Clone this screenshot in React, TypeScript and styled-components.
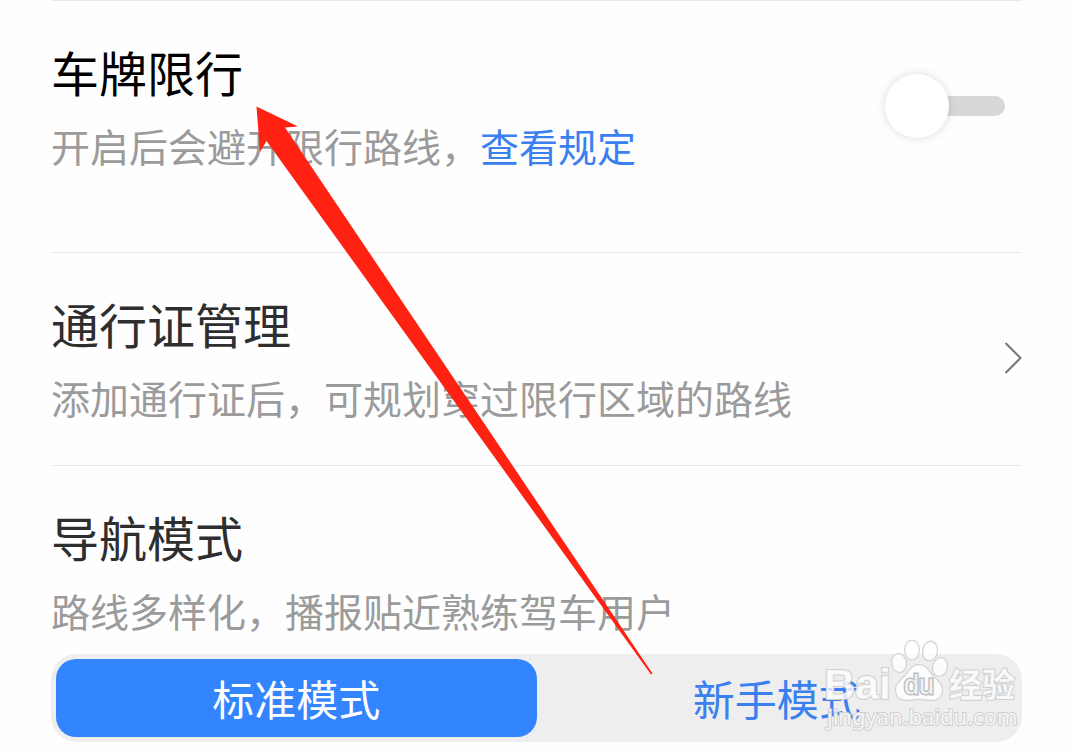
import React, { useState } from "react";
import styled, { createGlobalStyle } from "styled-components";

const GlobalStyle = createGlobalStyle`
  * {
    box-sizing: border-box;
  }
  body {
    margin: 0;
    background: #fefefe;
    font-family: "Noto Sans CJK SC", sans-serif;
  }
`;

const Page = styled.main`
  position: relative;
  padding: 0 54px 12px 51px;
  overflow: hidden;
`;

const Section = styled.section<{ $bottom: number }>`
  border-top: 1px solid #e9e9e9;
  padding: 36px 0 ${(p) => p.$bottom}px;
`;

const Row = styled.div`
  display: flex;
  align-items: center;
  justify-content: space-between;
`;

const Texts = styled.div`
  display: flex;
  flex-direction: column;
  gap: 18px;
  padding-bottom: 8px;
`;

const Title = styled.h2<{ $strong?: boolean }>`
  margin: 0;
  font-size: 48px;
  line-height: 68px;
  font-weight: 400;
  color: ${(p) => (p.$strong ? "#000" : "#2e2e2e")};
`;

const Description = styled.p`
  margin: 0;
  font-size: 39px;
  line-height: 44px;
  font-weight: 400;
  white-space: nowrap;
  color: #9b9b9b;
`;

const RuleLink = styled.a`
  color: #3a80f0;
  text-decoration: none;
`;

const Switch = styled.input`
  appearance: none;
  flex: none;
  display: flex;
  align-items: center;
  width: 120px;
  height: 64px;
  margin: 0 17px 0 0;
  cursor: pointer;

  &::before {
    content: "";
    flex: none;
    width: 64px;
    height: 64px;
    border-radius: 50%;
    background: #fff;
    box-shadow: 0 0 10px rgba(0, 0, 0, 0.14);
    z-index: 1;
  }

  &::after {
    content: "";
    flex: 1;
    height: 20px;
    margin-left: -8px;
    border-radius: 0 10px 10px 0;
    background: #d8d8d8;
  }

  &:checked::before {
    order: 2;
  }

  &:checked::after {
    margin: 0 -8px 0 0;
    border-radius: 10px 0 0 10px;
    background: #3385ff;
  }
`;

const MoreButton = styled.button`
  flex: none;
  display: flex;
  padding: 0;
  border: 0;
  background: none;
  cursor: pointer;
`;

const Segments = styled.div`
  display: flex;
  margin-top: 14px;
  padding: 5px;
  border-radius: 26px;
  background: #eeeeef;
`;

const HiddenRadio = styled.input`
  appearance: none;
  margin: 0;
  width: 0;
  height: 0;
`;

const Segment = styled.label<{ $active: boolean }>`
  flex: 1;
  display: flex;
  align-items: center;
  justify-content: center;
  height: 78px;
  border-radius: 20px;
  font-size: 42px;
  line-height: 60px;
  color: ${(p) => (p.$active ? "#fff" : "#3a80f0")};
  background: ${(p) => (p.$active ? "#3385ff" : "transparent")};
  cursor: pointer;
`;

const Arrow = styled.svg`
  position: absolute;
  left: 0;
  top: 0;
  pointer-events: none;
`;

const Watermark = styled.svg`
  position: absolute;
  right: 52px;
  bottom: 16px;
  pointer-events: none;
`;

const modes = ["标准模式", "新手模式"];

export default function App() {
  const [mode, setMode] = useState(modes[0]);

  return (
    <>
      <GlobalStyle />
      <Page>
        <Section $bottom={77}>
          <Row>
            <Texts>
              <Title $strong id="plate-title">车牌限行</Title>
              <Description>
                开启后会避开限行路线，<RuleLink href="#rules">查看规定</RuleLink>
              </Description>
            </Texts>
            <Switch type="checkbox" role="switch" aria-labelledby="plate-title" />
          </Row>
        </Section>

        <Section $bottom={38}>
          <Row>
            <Texts>
              <Title>通行证管理</Title>
              <Description>添加通行证后，可规划穿过限行区域的路线</Description>
            </Texts>
            <MoreButton type="button" aria-label="通行证管理">
              <svg width="18" height="34" viewBox="0 0 18 34" fill="none" stroke="#777" strokeWidth="2">
                <path d="M1.5 2 16.500 17 1.500 32" />
              </svg>
            </MoreButton>
          </Row>
        </Section>

        <Section $bottom={0}>
          <Texts>
            <Title>导航模式</Title>
            <Description>路线多样化，播报贴近熟练驾车用户</Description>
          </Texts>
          <Segments role="radiogroup" aria-label="导航模式">
            {modes.map((name) => (
              <Segment key={name} $active={mode === name}>
                <HiddenRadio
                  type="radio"
                  name="mode"
                  checked={mode === name}
                  onChange={() => setMode(name)}
                />
                {name}
              </Segment>
            ))}
          </Segments>
        </Section>

        <Watermark
          width="200"
          height="100"
          viewBox="0 0 200 100"
          fill="#fff"
          fillOpacity="0.8"
          stroke="#d0d0d0"
          strokeWidth="2"
          paintOrder="stroke"
        >
          <text x="0" y="61" fontFamily="Liberation Sans" fontWeight="700" fontSize="43">
            Bai
          </text>
          <ellipse cx="75" cy="25" rx="7" ry="9" transform="rotate(-10 75 25)" />
          <ellipse cx="88" cy="12" rx="7" ry="9.500" />
          <ellipse cx="106" cy="13" rx="7" ry="9.500" transform="rotate(10 106 13)" />
          <ellipse cx="116" cy="29" rx="7" ry="9" transform="rotate(14 116 29)" />
          <path d="M95 27c-7 0-9 5-13 10-5 6-10 8-10 15 0 6 4 10 10 10 5 0 8-1 13-1s8 1 13 1c6 0 10-4 10-10 0-7-5-9-10-15-4-5-6-10-13-10z" />
          <text x="80" y="56" fontFamily="Liberation Sans" fontSize="27" stroke="#bfbfbf" strokeWidth="3">
            du
          </text>
          <text x="125" y="59" fontFamily="Noto Sans CJK SC" fontWeight="700" fontSize="33">
            经验
          </text>
          <text x="3" y="87" fontFamily="Noto Sans" fontSize="22">
            jingyan.baidu.com
          </text>
        </Watermark>

        <Arrow width="660" height="680" viewBox="0 0 660 680" fill="#ff2112">
          <path d="M256.500 106.500 298 126.500 285 127.500 652.500 673.500 651 674.500 266.500 141 260 152z" />
        </Arrow>
      </Page>
    </>
  );
}
